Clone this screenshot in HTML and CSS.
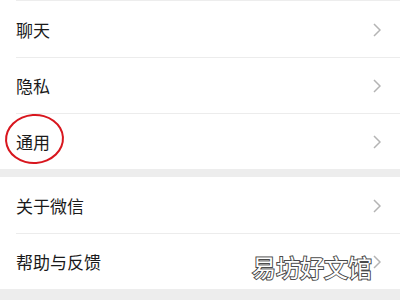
FILE: index.html
```html
<!DOCTYPE html>
<html lang="zh-CN">
<head>
  <meta charset="UTF-8">
  <meta name="viewport" content="width=device-width, initial-scale=1.0">
  <title>设置</title>
  <link rel="stylesheet" href="styles.css">
</head>
<body>
  <!-- first group -->
  <div class="group first">
    <div class="row">
      <span class="label">聊天</span>
      <svg class="chevron" viewBox="0 0 8 14"><path d="M1 1 L7 7 L1 13"/></svg>
    </div>
    <div class="row">
      <span class="label">隐私</span>
      <svg class="chevron" viewBox="0 0 8 14"><path d="M1 1 L7 7 L1 13"/></svg>
    </div>
    <div class="row">
      <span class="label circled">通用</span>
      <svg class="chevron" viewBox="0 0 8 14"><path d="M1 1 L7 7 L1 13"/></svg>
    </div>
  </div>

  <div class="gap"></div>

  <!-- second group -->
  <div class="group">
    <div class="row">
      <span class="label">关于微信</span>
      <svg class="chevron" viewBox="0 0 8 14"><path d="M1 1 L7 7 L1 13"/></svg>
    </div>
    <div class="row">
      <span class="label">帮助与反馈</span>
      <svg class="chevron" viewBox="0 0 8 14"><path d="M1 1 L7 7 L1 13"/></svg>
    </div>
  </div>

  <div class="gap bottom"></div>

  <div class="watermark">易坊好文馆</div>
</body>
</html>
```

FILE: styles.css
```css
body {
  margin: 0;
  background-color: #ffffff;
  font-family: "Noto Sans CJK SC", "Noto Sans", sans-serif;
  position: relative;
  overflow: hidden;
}

.group {
  background-color: #ffffff;
}

.group.first {
  border-top: 1px solid #ededed;
  margin-left: 16px;
}

.group.first .row {
  margin-left: -16px;
}

.row {
  height: 55px;
  display: flex;
  align-items: center;
  justify-content: space-between;
  padding: 1px 19px 0 16px;
  position: relative;
}

/* divider between rows, inset on the left */
.row + .row::before {
  content: "";
  position: absolute;
  top: 0;
  left: 16px;
  right: 0;
  border-top: 1px solid #ececec;
}

.label {
  font-size: 17px;
  color: #1a1a1a;
  position: relative;
}

/* red hand-drawn circle round the item */
.circled::after {
  content: "";
  position: absolute;
  box-sizing: border-box;
  left: -11px;
  top: -15px;
  width: 59px;
  height: 50px;
  border: 2.5px solid #d8161e;
  border-radius: 50%;
  transform: rotate(-4deg);
}

.chevron {
  width: 8px;
  height: 14px;
  fill: none;
  stroke: #b4b4b4;
  stroke-width: 1.5;
}

.gap {
  height: 8px;
  background-color: #ededed;
}

.gap.bottom {
  height: 20px;
}

.watermark {
  position: absolute;
  left: 252px;
  top: 249px;
  font-size: 24px;
  color: #ffffff;
  -webkit-text-stroke: 2px #4a4a4a;
  paint-order: stroke fill;
  letter-spacing: 0;
}
```
